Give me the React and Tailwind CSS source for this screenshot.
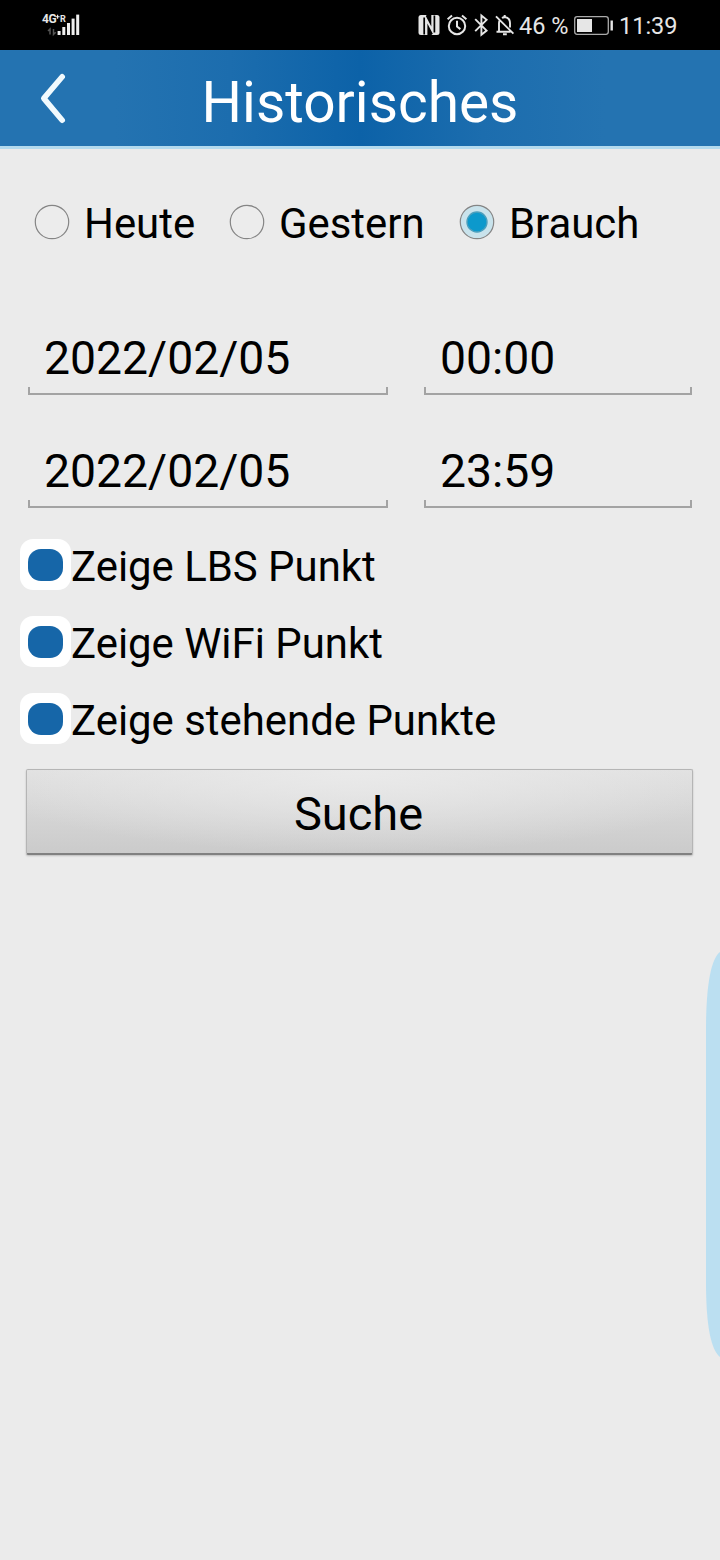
import { useState } from "react";

const ranges = [
  { id: "today", label: "Heute", width: "w-[195px]" },
  { id: "yesterday", label: "Gestern", width: "w-[230px]" },
  { id: "custom", label: "Brauch", width: "w-[220px]" },
];

const options = ["Zeige LBS Punkt", "Zeige WiFi Punkt", "Zeige stehende Punkte"];

function SignalIcon() {
  return (
    <svg width="70" height="50" viewBox="0 0 70 50" fill="#efefef">
      <rect x="27.6" y="31" width="3" height="4" />
      <rect x="32.3" y="27" width="3" height="8" />
      <rect x="37" y="23" width="3" height="12" />
      <rect x="41.6" y="18.6" width="3" height="16.4" />
      <rect x="46.2" y="14.6" width="3" height="20.4" />
      <path d="M20 34.5V29l-2 2M23.5 29v5.5l2.2-2.2" stroke="#555" strokeWidth="1.5" fill="none" />
      <path d="M27.6 14.7v4M25.6 16.7h4" stroke="#efefef" strokeWidth="1.1" />
    </svg>
  );
}

function StatusIcons() {
  return (
    <svg width="109" height="50" viewBox="410 0 109 50" fill="none" stroke="#e6e6e6" strokeWidth="2" className="shrink-0">
      {/* nfc */}
      <rect x="418.5" y="15" width="21" height="20" rx="2.5" fill="#e6e6e6" stroke="none" />
      <path d="M424.2 34.5V17.5M434.4 15.5v17" stroke="#000" strokeWidth="1.7" />
      <path d="M427.4 23.5l5.4 10.2-1.4 1.3h-4zM431.3 26.5L425.8 16l1-1h4.5z" fill="#000" stroke="none" />
      {/* alarm */}
      <circle cx="457" cy="26" r="8.2" />
      <path d="M457 20.8v5.7l3.4 2.6M447.6 19.2l4.4-3.7M466.4 19.2l-4.4-3.7" />
      {/* bluetooth */}
      <path d="M475.2 19.2l11.4 11.4-5.2 4.2V15.6l5.2 4.2-11.4 11.4" strokeWidth="1.9" />
      {/* bell off */}
      <path d="M496 16.4l17.4 17.2M496.5 31.7h14M499 31.5v-8.2q0-1.5.6-2.8M502 18q1-.6 2.6-1 5.2.5 5.4 6v4.5" strokeWidth="1.9" />
      <path d="M504.7 15v2M503 34.2h3.8" strokeWidth="2" />
    </svg>
  );
}

function StatusBar() {
  return (
    <div className="flex h-[50px] items-center justify-between bg-black pl-[30px] text-[#e6e6e6]">
      <div className="relative h-[50px] w-[70px]">
        <SignalIcon />
        <span className="absolute left-[12px] top-[13px] text-[12px] font-bold leading-[13px] tracking-[-0.5px]">4G</span>
        <span className="absolute left-[30px] top-[13px] text-[9px] font-bold leading-[12px]">R</span>
      </div>
      <div className="flex h-[50px] w-[310px] items-center">
        <StatusIcons />
        <span className="w-[54px] shrink-0 whitespace-nowrap pt-[2px] text-[23.5px] leading-[50px]">46 %</span>
        <svg width="46" height="50" viewBox="573 0 46 50" fill="none" className="shrink-0">
          <rect x="574.7" y="16.7" width="33.6" height="17.6" rx="2.5" stroke="#aaa" strokeWidth="1.3" />
          <rect x="577" y="19" width="15" height="13" fill="#e6e6e6" />
          <path d="M611.7 20.5v10" stroke="#e6e6e6" strokeWidth="2.4" />
        </svg>
        <span className="whitespace-nowrap pt-[2px] text-[23.5px] leading-[50px]">11:39</span>
      </div>
    </div>
  );
}

function Header() {
  return (
    <header className="grid h-[99px] grid-cols-[110px_1fr_110px] items-center border-b-[3px] border-[#b3daee] bg-[linear-gradient(90deg,#2473b1_0%,#2473b1_16%,#1c6dae_32%,#0c62a8_50%,#1c6dae_67%,#2473b1_84%,#2473b1_100%)] bg-origin-border">
      <button aria-label="Zurück" className="flex pl-[38px]">
        <svg width="30" height="54" viewBox="38 71 30 54" fill="none">
          <path d="M62.2 76.8L43.8 98.4l18.4 21.8" stroke="#f1fafe" strokeWidth="5.6" strokeLinecap="round" strokeLinejoin="round" />
        </svg>
      </button>
      <h1 className="pt-[9px] text-center text-[56.8px] leading-[66px] text-white">Historisches</h1>
    </header>
  );
}

function Radio({ checked }) {
  return (
    <svg width="36" height="36" viewBox="0 0 36 36" className="-mt-[5px] shrink-0">
      <circle cx="18" cy="18" r="16.7" fill={checked ? "#c9e3ec" : "#ececec"} stroke="#858585" strokeWidth="1.2" />
      {checked && <circle cx="18" cy="18" r="10" fill="#0c99cc" stroke="#4a9fbd" strokeWidth="1.4" />}
    </svg>
  );
}

function Field({ value }) {
  return (
    <div className="flex h-[75px] flex-col justify-end">
      <span className="pl-[16px] text-[46.3px] leading-[54px]">{value}</span>
      <div className="mt-[2px] h-[8px] border-x-2 border-b-2 border-[#a3a3a3]" />
    </div>
  );
}

export default function App() {
  const [range, setRange] = useState("custom");
  const [checked, setChecked] = useState([true, true, true]);

  const toggle = (index) => {
    setChecked(checked.map((c, i) => (i === index ? !c : c)));
  };

  return (
    <main className="relative flex h-[1560px] w-[720px] flex-col overflow-hidden bg-[#ebebeb] font-[Roboto,sans-serif] text-black">
      <StatusBar />
      <Header />

      <div className="mt-[44px] flex h-[62px] pl-[34px]">
        {ranges.map((r) => (
          <button
            key={r.id}
            onClick={() => setRange(r.id)}
            className={`flex items-center gap-[14px] text-[41.9px] leading-[62px] ${r.width}`}
          >
            <Radio checked={range === r.id} />
            <span>{r.label}</span>
          </button>
        ))}
      </div>

      <div className="mt-[65px] grid grid-cols-[360px_268px] gap-x-[36px] gap-y-[38px] pl-[28px]">
        <Field value="2022/02/05" />
        <Field value="00:00" />
        <Field value="2022/02/05" />
        <Field value="23:59" />
      </div>

      <div className="mt-[20px] flex flex-col pl-[20px]">
        {options.map((label, i) => (
          <button key={label} onClick={() => toggle(i)} className="flex h-[77px] items-center text-[41.9px] leading-[77px]">
            <span className="-mt-[4px] flex h-[51px] w-[51px] items-center justify-center rounded-[13px] bg-white">
              {checked[i] && <span className="h-[32px] w-[35px] rounded-[13px] bg-[#1666a8]" />}
            </span>
            <span>{label}</span>
          </button>
        ))}
      </div>

      <button className="ml-[26px] mt-[10px] h-[86px] w-[667px] rounded-[2px] border border-b-2 border-[#b5b5b5] border-b-[#808080] bg-[radial-gradient(ellipse_60%_100%_at_50%_0%,#eaeaea_0%,rgba(234,234,234,0)_100%),linear-gradient(#e0e0e0,#cbcbcb)] pr-[2px] pt-[4px] text-[47px] leading-[79px] shadow-[0_1px_2px_#bbb]">
        Suche
      </button>

      {/* edge panel handle */}
      <svg width="14" height="410" viewBox="0 0 14 410" className="absolute right-0 top-[950px]">
        <path d="M14 2C5 9 0 35 0 80V332C0 376 5 400 14 407z" fill="#bbdff1" />
      </svg>
    </main>
  );
}
